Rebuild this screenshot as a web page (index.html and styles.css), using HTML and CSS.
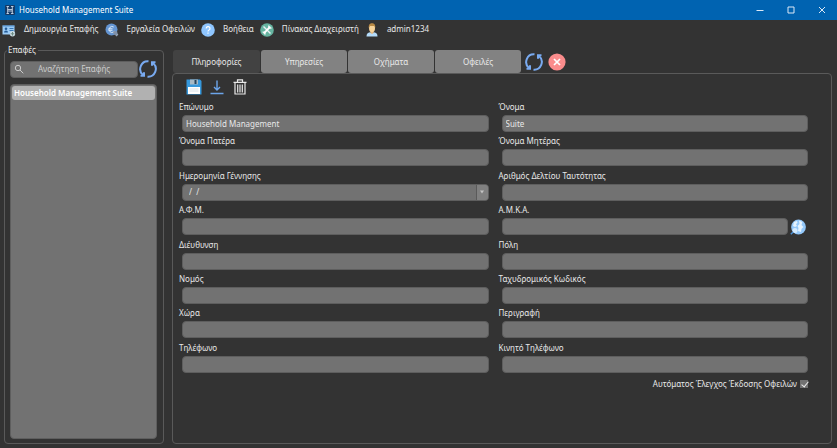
FILE: index.html
```html
<!DOCTYPE html>
<html lang="el">
<head>
<meta charset="utf-8">
<title>Household Management Suite</title>
<link rel="stylesheet" href="styles.css">
</head>
<body>
<header class="titlebar">
  <svg class="logo" viewBox="0 0 10 10"><rect width="10" height="10" rx="1" fill="#143a66"/><path d="M1.500 1.500h2.500M6 1.500h2.500M1.500 8.500h2.500M6 8.500h2.500M2.700 1.500v7M7.300 1.500v7M2.700 4.500h4.600M2.700 6h4.600" stroke="#dce9f8" stroke-width=".8" fill="none"/></svg>
  <h1 class="title">Household Management Suite</h1>
  <div class="window-buttons">
    <button aria-label="Ελαχιστοποίηση"><svg viewBox="0 0 8 8"><path d="M.5 4.500h7"/></svg></button>
    <button aria-label="Μεγιστοποίηση"><svg viewBox="0 0 8 8"><path d="M1 1h6v6H1z"/></svg></button>
    <button aria-label="Κλείσιμο"><svg viewBox="0 0 8 8"><path d="M1 1l6 6M7 1L1 7"/></svg></button>
  </div>
</header>
<nav class="menu">
  <button class="menu-item"><svg viewBox="0 0 14 14"><path fill="#9ccbf5" d="M.5 2.500h12v9H.5z"/><path fill="#4d8ed0" d="M.5 2.500h12v1H.5z"/><circle cx="4" cy="5.800" r="1.300" fill="#235a96"/><path d="M2 9.500q0-2 2-2t2 2z" fill="#235a96"/><path d="M7.500 5.500h4M7.500 7.500h4" stroke="#3777b8"/><circle cx="10.500" cy="10.800" r="2.700" fill="#c9dbe1"/><path d="M10.500 9v3.600M8.700 10.800h3.600" stroke="#6e8c85"/></svg><span>Δημιουργία Επαφής</span></button>
  <button class="menu-item"><svg viewBox="0 0 14 14"><circle cx="6.500" cy="6.500" r="6" fill="#6495d2"/><path d="M8.700 4a3 3 0 1 0 0 5M3.500 5.800h4M3.500 7.300h4" stroke="#d9eafa" fill="none"/><path d="M8.500 8.500l4 4" stroke="#98a6b8" stroke-width="2.500"/><circle cx="10.500" cy="10" r="2" fill="#8090a8"/></svg><span>Εργαλεία Οφειλών</span></button>
  <button class="menu-item"><svg viewBox="0 0 14 14"><circle cx="7" cy="7" r="6.800" fill="#8fc6ff"/><path d="M5.200 5.500a1.900 1.900 0 1 1 2.600 1.700q-.8.400-.8 1.300M7 9.600v1.200" stroke="#fff" stroke-width="1.200" fill="none"/></svg><span>Βοήθεια</span></button>
  <button class="menu-item"><svg viewBox="0 0 14 14"><circle cx="7" cy="7" r="6.800" fill="#66b4a0"/><path d="M3.500 3.500l7 7" stroke="#e8f1f4" stroke-width="1.400"/><path d="M10.300 3.700l-6.600 6.800" stroke="#fff" stroke-width="1.800"/><path d="M8.700 2.500l.3 2.400 2.500.3M2.500 9l2.300.3.300 2.300" stroke="#fff" fill="none" stroke-width="1.200"/></svg><span>Πίνακας Διαχειριστή</span></button>
  <button class="menu-item"><svg viewBox="0 0 14 14"><path d="M1.500 13.500q0-3.700 3.500-4.200l2 .7 2-.7q3.500.5 3.500 4.200z" fill="#b5dcfa"/><path d="M5.500 8h3v2L7 11l-1.500-1z" fill="#e8b77b"/><ellipse cx="7" cy="5" rx="3" ry="4.300" fill="#f7d398"/><path d="M3.700 5Q3.400.3 7 .3T10.300 5L9.500 3H5z" fill="#b98943"/></svg><span>admin1234</span></button>
</nav>
<main class="workspace">
  <fieldset class="contacts">
    <legend>Επαφές</legend>
    <div class="search-row">
      <label class="search">
        <svg viewBox="0 0 10 10"><circle cx="4" cy="4" r="2.700"/><path d="M6 6l3.300 3.300"/></svg>
        <input type="search" placeholder="Αναζήτηση Επαφής" aria-label="Αναζήτηση Επαφής">
      </label>
      <button class="refresh" aria-label="Ανανέωση επαφών"><svg viewBox="0 0 18 18"><path d="M9.500 1.300A7.700 7.700 0 0 0 4 14.900M8.500 16.700A7.700 7.700 0 0 0 14 3.100"/><path d="M1.500 15.800h3.500v-3.500M16.500 2.200h-3.500v3.500"/></svg></button>
    </div>
    <ul class="contact-list"><li><button class="contact">Household Management Suite</button></li></ul>
  </fieldset>
  <section class="details">
    <div class="tabs">
      <button class="tab active">Πληροφορίες</button>
      <button class="tab">Υπηρεσίες</button>
      <button class="tab">Οχήματα</button>
      <button class="tab">Οφειλές</button>
      <button class="refresh" aria-label="Ανανέωση"><svg viewBox="0 0 18 18"><path d="M9.500 1.300A7.700 7.700 0 0 0 4 14.900M8.500 16.700A7.700 7.700 0 0 0 14 3.100"/><path d="M1.500 15.800h3.500v-3.500M16.500 2.200h-3.500v3.500"/></svg></button>
      <button class="close" aria-label="Κλείσιμο επαφής"><svg viewBox="0 0 18 18"><circle cx="9" cy="9" r="8.600" fill="#fa8c8c"/><path d="M6 6l6 6M12 6l-6 6" stroke="#fff" stroke-width="1.700"/></svg></button>
    </div>
    <form class="panel">
      <div class="tools">
        <button type="button" aria-label="Αποθήκευση"><svg viewBox="0 0 16 16"><path d="M.5.500h13.500L15.500 2v13.500H.5z" fill="#3698dc"/><path d="M4 .5h8v5H4z" fill="#a7b9c5"/><path d="M8.500 1h2v4h-2z" fill="#26445c"/><path d="M2 8h12v7H2z" fill="#fff"/><path d="M3.500 10h9M3.500 12h9" stroke="#dbe3e8"/></svg></button>
        <button type="button" aria-label="Λήψη"><svg viewBox="0 0 16 16"><path d="M8 1.500v9.500M5 8l3 3 3-3M1.500 14.500h13" stroke="#6ca5ea" stroke-width="1.400" fill="none"/></svg></button>
        <button type="button" aria-label="Διαγραφή"><svg viewBox="0 0 16 16"><path d="M1.500 3.300h13M5.500 3V.8h5V3M3 3.500V15h10V3.500M5.700 5.500v8M8 5.500v8M10.300 5.500v8" stroke="#e8e8e8" stroke-width="1.200" fill="none"/></svg></button>
      </div>
      <div class="fields">
        <div class="field"><label for="surname">Επώνυμο</label><input id="surname" type="text" value="Household Management"></div>
        <div class="field"><label for="name">Όνομα</label><input id="name" type="text" value="Suite"></div>
        <div class="field"><label for="father">Όνομα Πατέρα</label><input id="father" type="text"></div>
        <div class="field"><label for="mother">Όνομα Μητέρας</label><input id="mother" type="text"></div>
        <div class="field"><label for="birth">Ημερομηνία Γέννησης</label><div class="date"><input id="birth" type="text" value="/  /"><button type="button" aria-label="Επιλογή ημερομηνίας"><svg viewBox="0 0 6 6"><path d="M1 1.500h4L3 4.500z" fill="#c4c4c4"/></svg></button></div></div>
        <div class="field"><label for="identity">Αριθμός Δελτίου Ταυτότητας</label><input id="identity" type="text"></div>
        <div class="field"><label for="afm">Α.Φ.Μ.</label><input id="afm" type="text"></div>
        <div class="field"><label for="amka">Α.Μ.Κ.Α.</label><div class="lookup"><input id="amka" type="text"><button type="button" aria-label="Αναζήτηση Α.Μ.Κ.Α."><svg viewBox="0 0 16 16"><circle cx="8.500" cy="8" r="7.400" fill="#93c8fa"/><path d="M4 3l3-1 .5 2-1.500 1 1 2-2 1-2-1zM9 1.500l3.500 1.500-1 3 2 2-2 2-.5 3-3-1 .5-3-1-2 2-2z" fill="#e4f3ff"/><circle cx="5" cy="11.500" r="2.500" fill="#d5ebff"/><path d="M3.200 13L.8 15.300" stroke="#4890d8" stroke-width="1.500"/></svg></button></div></div>
        <div class="field"><label for="address">Διέυθυνση</label><input id="address" type="text"></div>
        <div class="field"><label for="city">Πόλη</label><input id="city" type="text"></div>
        <div class="field"><label for="region">Νομός</label><input id="region" type="text"></div>
        <div class="field"><label for="postcode">Ταχυδρομικός Κωδικός</label><input id="postcode" type="text"></div>
        <div class="field"><label for="country">Χώρα</label><input id="country" type="text"></div>
        <div class="field"><label for="description">Περιγραφή</label><input id="description" type="text"></div>
        <div class="field"><label for="phone">Τηλέφωνο</label><input id="phone" type="text"></div>
        <div class="field"><label for="mobile">Κινητό Τηλέφωνο</label><input id="mobile" type="text"></div>
      </div>
      <label class="auto-check">Αυτόματος Έλεγχος Έκδοσης Οφειλών <input type="checkbox" checked></label>
    </form>
  </section>
</main>
</body>
</html>
```
FILE: styles.css
```css
* { box-sizing: border-box; }

body {
  margin: 0;
  min-height: 100vh;
  display: flex;
  flex-direction: column;
  background: #333;
  color: #e8e8e8;
  font: 8px/12px "Noto Sans", "Open Sans", sans-serif;
}

button, input { font: inherit; color: inherit; }
button { padding: 0; border: 0; background: none; }
svg { display: block; flex: none; fill: none; }

.titlebar {
  display: flex;
  align-items: center;
  height: 20px;
  padding-left: 5px;
  background: #0063b1;
}
.logo { width: 10px; height: 10px; }
.title { margin: 0 0 0 4px; font-size: 8px; font-weight: 400; color: #fff; }
.window-buttons { display: flex; margin-left: auto; }
.window-buttons button {
  display: flex;
  align-items: center;
  justify-content: center;
  width: 31px;
  height: 20px;
}
.window-buttons svg { width: 8px; height: 8px; stroke: #dce9f6; }

.menu { display: flex; height: 20px; padding-left: 2px; }
.menu-item { display: flex; align-items: center; gap: 8px; white-space: nowrap; }
.menu-item + .menu-item { margin-left: 6px; }
.menu-item svg { width: 14px; height: 14px; }
.menu-item span { padding-bottom: 2px; }

.workspace { flex: 1; display: flex; gap: 8px; padding: 4px 5px 4px 4px; }

.contacts {
  flex: 0 0 160px;
  min-width: 0;
  display: flex;
  flex-direction: column;
  margin: 0;
  padding: 4px 6px 4px 5px;
  border: 1px solid #5a5a5a;
  border-radius: 4px;
}
.contacts legend { margin-left: -3px; padding: 0 2px 0 1px; }
.search-row { display: flex; align-items: center; gap: 1px; margin-bottom: 6px; }
.search {
  flex: 1;
  min-width: 0;
  display: flex;
  align-items: center;
  height: 17px;
  padding-left: 3px;
  background: #727272;
  border: 1px solid #5e5e5e;
  border-radius: 4px;
}
.search svg { width: 10px; height: 10px; stroke: #ccc; }
.search input {
  flex: 1;
  min-width: 0;
  padding: 0 0 0 14px;
  border: 0;
  background: none;
}
.search input::placeholder { color: #ccc; }
.refresh svg, .close svg { width: 18px; height: 18px; }
.refresh svg { stroke: #79aaf0; stroke-width: 2; }
.contact-list {
  flex: 1;
  margin: 0;
  padding: 1px;
  list-style: none;
  background: #727272;
  border: 1px solid #5e5e5e;
  border-radius: 4px;
}
.contact {
  display: block;
  width: 100%;
  height: 14px;
  padding-left: 2px;
  border-radius: 3px;
  background: #b1b1b1;
  color: #fff;
  font-weight: 600;
  text-align: left;
  white-space: nowrap;
}

.details { flex: 1; min-width: 0; display: flex; flex-direction: column; padding-top: 6px; }
.tabs { display: flex; gap: 1px; align-items: center; padding-left: 1px; }
.tab {
  flex: 0 1 87px;
  height: 23px;
  border-radius: 3px;
  background: #828282;
}
.tab + .tab { flex-basis: 86px; }
.tab.active { background: #424242; }
.tabs .refresh { margin-left: 3px; }
.tabs .close { margin-left: 4px; }

.panel {
  flex: 1;
  display: flex;
  flex-direction: column;
  padding: 5px 23px 51px 6px;
  border: 1px solid #5a5a5a;
  border-radius: 4px;
}
.tools { display: flex; gap: 7px; margin: 0 0 6px 7px; }
.tools svg { width: 16px; height: 16px; }

.fields {
  flex: 1;
  display: grid;
  grid-template-columns: 1fr 1fr;
  grid-auto-rows: 1fr;
  column-gap: 10px;
}
.field > label { display: block; height: 14px; }
.field > input, .date, .lookup { display: flex; width: calc(100% - 3px); margin-left: 3px; }
.field > input, .date, .lookup input {
  height: 17px;
  padding: 0 3px;
  background: #727272;
  border: 1px solid #5e5e5e;
  border-radius: 4px;
}
.date { padding: 0; }
.date input { flex: 1; min-width: 0; padding: 0 6px; border: 0; background: none; white-space: pre; }
.date button {
  display: flex;
  align-items: center;
  justify-content: center;
  width: 12px;
  border-left: 1px solid #5a5a5a;
  border-radius: 0 3px 3px 0;
  background: #808080;
}
.date svg { width: 6px; height: 6px; }
.lookup { gap: 2px; align-items: center; }
.lookup input { flex: 1; min-width: 0; }
.lookup button { padding-right: 2px; }
.lookup svg { width: 16px; height: 16px; }

.auto-check {
  display: flex;
  align-items: center;
  justify-content: flex-end;
  gap: 3px;
  height: 16px;
}
.auto-check input {
  appearance: none;
  width: 8px;
  height: 8px;
  margin: 0;
  background: #727272;
}
.auto-check input:checked::before {
  content: "";
  display: block;
  width: 3px;
  height: 6px;
  margin: 0 3px;
  border: solid #eee;
  border-width: 0 1px 1px 0;
  transform: rotate(40deg);
}
```
